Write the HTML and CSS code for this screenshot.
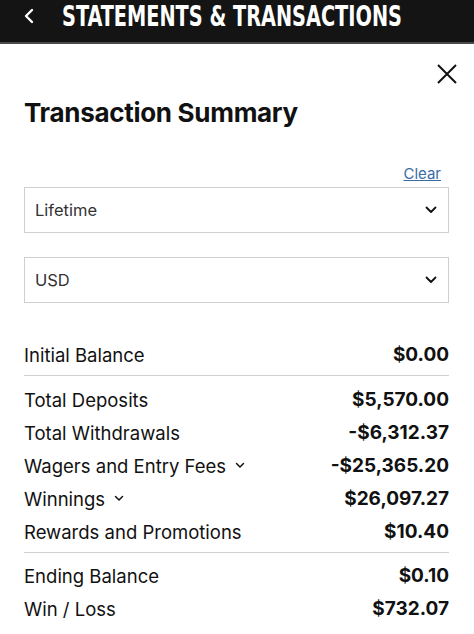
FILE: index.html
```html
<!DOCTYPE html>
<html>
<head>
<meta charset="utf-8">
<link rel="stylesheet" href="styles.css">
</head>
<body>
<header class="topbar">
  <svg class="back" width="12" height="16" viewBox="0 0 12 16"><path d="M9 2 L3 8 L9 14" fill="none" stroke="#fff" stroke-width="2.4" stroke-linecap="round" stroke-linejoin="round"/></svg>
  <span class="topbar-title">STATEMENTS &amp; TRANSACTIONS</span>
</header>
<main class="panel">
  <div class="close-row">
    <svg class="close" width="20" height="20" viewBox="0 0 20 20"><path d="M1 1 L19 19 M19 1 L1 19" fill="none" stroke="#111" stroke-width="2"/></svg>
  </div>
  <h1 class="title">Transaction Summary</h1>
  <div class="clear-row"><a class="clear">Clear</a></div>
  <div class="select"><span>Lifetime</span><svg width="12" height="8" viewBox="0 0 12 8"><path d="M1.5 1.5 L6 6 L10.5 1.5" fill="none" stroke="#111" stroke-width="1.8" stroke-linecap="round" stroke-linejoin="round"/></svg></div>
  <div class="select"><span>USD</span><svg width="12" height="8" viewBox="0 0 12 8"><path d="M1.5 1.5 L6 6 L10.5 1.5" fill="none" stroke="#111" stroke-width="1.8" stroke-linecap="round" stroke-linejoin="round"/></svg></div>

  <section class="summary">
    <div class="group">
      <div class="row"><span class="label">Initial Balance</span><span class="val">$0.00</span></div>
    </div>
    <div class="group">
      <div class="row"><span class="label">Total Deposits</span><span class="val">$5,570.00</span></div>
      <div class="row"><span class="label">Total Withdrawals</span><span class="val">-$6,312.37</span></div>
      <div class="row"><span class="label">Wagers and Entry Fees <svg class="mini" width="10" height="7" viewBox="0 0 10 7"><path d="M1.5 1.5 L5 5 L8.5 1.5" fill="none" stroke="#111" stroke-width="1.5" stroke-linecap="round" stroke-linejoin="round"/></svg></span><span class="val">-$25,365.20</span></div>
      <div class="row"><span class="label">Winnings <svg class="mini" width="10" height="7" viewBox="0 0 10 7"><path d="M1.5 1.5 L5 5 L8.5 1.5" fill="none" stroke="#111" stroke-width="1.5" stroke-linecap="round" stroke-linejoin="round"/></svg></span><span class="val">$26,097.27</span></div>
      <div class="row"><span class="label">Rewards and Promotions</span><span class="val">$10.40</span></div>
    </div>
    <div class="group last">
      <div class="row"><span class="label">Ending Balance</span><span class="val">$0.10</span></div>
      <div class="row"><span class="label">Win / Loss</span><span class="val">$732.07</span></div>
    </div>
  </section>
</main>
</body>
</html>
```
FILE: styles.css
```css
* { box-sizing: border-box; }
html, body { margin: 0; padding: 0; background: #fff; }
body { font-family: Inter, "Liberation Sans", sans-serif; color: #111; }

.topbar {
  height: 44px;
  background: #141414;
  border-bottom: 2px solid #4a4a4a;
  display: flex;
  align-items: center;
  padding: 0 0 10px 23px;
  gap: 27px;
  overflow: hidden;
}
.back { flex: none; display: block; }
.topbar-title {
  flex: none;
  color: #fff;
  font-family: "DejaVu Sans Condensed", "Liberation Sans Narrow", sans-serif;
  font-weight: bold;
  font-size: 29px;
  line-height: 1;
  white-space: nowrap;
  transform: scaleX(0.74);
  transform-origin: left center;
}

.panel { padding: 0 25px 0 24px; }
.close-row { display: flex; justify-content: flex-end; padding-top: 20px; margin-right: -8px; }
.close { display: block; }

.title {
  margin: 13px 0 0;
  font-size: 26px;
  font-weight: 700;
  line-height: 32px;
  letter-spacing: -0.3px;
}

.clear-row { display: flex; justify-content: flex-end; margin-top: 36px; margin-right: 8px; }
.clear { color: #3b6ba5; text-decoration: underline; font-size: 15px; line-height: 18px; }

.select {
  height: 46px;
  border: 1.5px solid #cfcfcf;
  display: flex;
  align-items: center;
  justify-content: space-between;
  padding: 0 11px 0 10px;
  font-size: 16.5px;
  color: #333;
  margin-top: 4px;
}
.select + .select { margin-top: 24px; }

.summary { margin-top: 35px; }
.group { border-bottom: 1.5px solid #d0d0d0; padding: 7px 0 4px; }
.group:first-child { padding-top: 0; }
.group.last { border-bottom: none; padding-top: 6px; }
.row { display: flex; justify-content: space-between; align-items: center; height: 33px; font-size: 18.5px; }
.label { display: flex; align-items: center; gap: 9px; }
.val { font-weight: 700; font-size: 19px; }
.mini { display: block; }
```
